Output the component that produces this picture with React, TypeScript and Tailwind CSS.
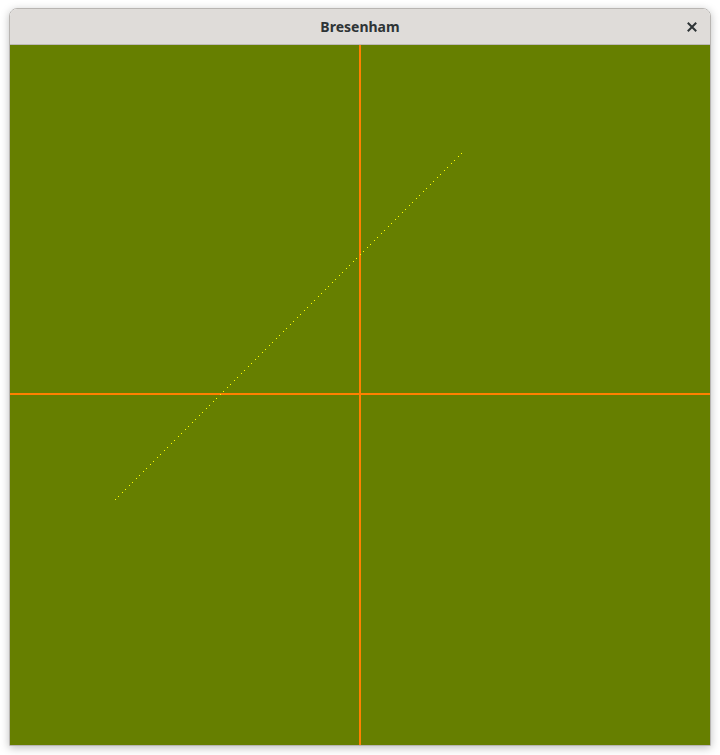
import React from "react";

const dots: { x: number; y: number }[] = [];
for (let i = 0; i < 100; i++) {
  const t = (i * 346) / 99;
  dots.push({ x: Math.round(105 + t), y: Math.round(454 - t) });
}

export default function App() {
  return (
    <div className="w-[720px] h-[755px] bg-white pl-[9px] pt-[8px]" style={{ fontFamily: '"Noto Sans", "Open Sans", sans-serif' }}>
      <div className="w-[702px] border border-[#b8b5b2] rounded-t-[8px] shadow-[0_2px_8px_rgba(0,0,0,0.25)] overflow-hidden">
        <div className="relative h-[36px] bg-[#dfdcd9] border-b border-[#bcb9b6] flex items-center justify-center">
          <span className="text-[14px] font-bold text-[#2e3436] leading-none">Bresenham</span>
          <svg className="absolute right-[13px] top-[13px]" width="10" height="10" viewBox="0 0 10 10">
            <path d="M1.5 1.5 L8.5 8.5 M8.5 1.5 L1.5 8.5" stroke="#2e3436" strokeWidth="2" strokeLinecap="square" />
          </svg>
        </div>
        <svg width="700" height="700" className="block" shapeRendering="crispEdges">
          <rect x="0" y="0" width="700" height="700" fill="#667f00" />
          <rect x="349" y="0" width="2" height="700" fill="#ff8000" />
          <rect x="0" y="348" width="700" height="2" fill="#ff8000" />
          {dots.map((d, i) => (
            <rect key={i} x={d.x} y={d.y} width="1" height="1" fill="#ffff00" />
          ))}
        </svg>
      </div>
    </div>
  );
}
